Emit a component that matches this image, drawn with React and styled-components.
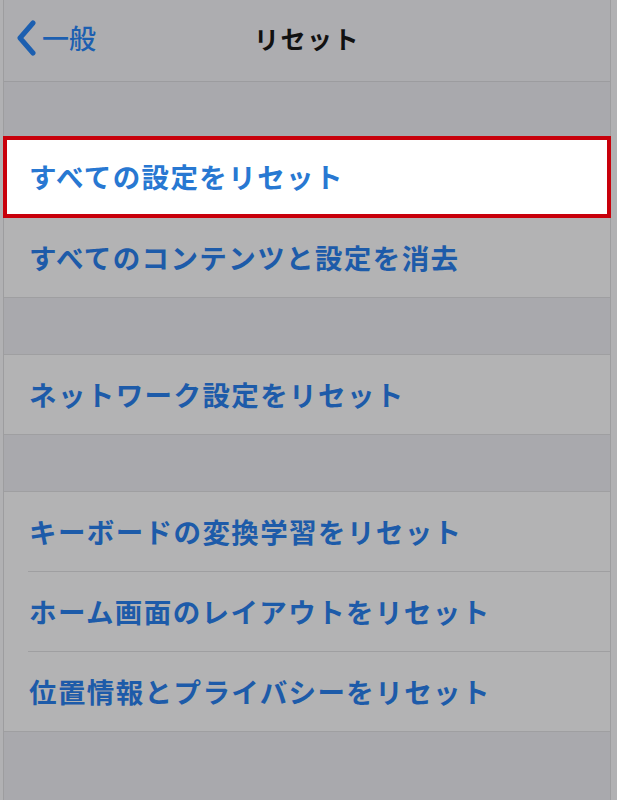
import React from 'react';
import styled, { createGlobalStyle } from 'styled-components';

const GlobalStyle = createGlobalStyle`
  html, body {
    margin: 0;
    padding: 0;
    background: #b1b1b3;
  }
  body {
    font-family: "Noto Sans CJK JP", "Noto Sans", sans-serif;
  }
`;

const Screen = styled.div`
  width: 617px;
  height: 800px;
  box-sizing: border-box;
  padding: 0 6px 0 3px;
  background: #b1b1b3;
  overflow: hidden;
`;

const Frame = styled.div`
  height: 100%;
  background: #a9a9ad;
  border-left: 1px solid #9d9d9f;
  border-right: 1px solid #9d9d9f;
  display: flex;
  flex-direction: column;
`;

const NavBar = styled.header`
  height: 82px;
  flex: none;
  display: grid;
  grid-template-columns: 1fr auto 1fr;
  align-items: center;
  background: #adadb0;
  border-bottom: 1px solid #9c9c9f;
  padding-bottom: 6px;
  box-sizing: border-box;
`;

const BackButton = styled.div`
  display: flex;
  align-items: center;
  gap: 3px;
  padding-left: 11px;
  color: #1c5fb0;
  font-size: 27px;
  font-weight: 500;
`;

const Title = styled.h1`
  margin: 0;
  font-size: 25px;
  font-weight: 700;
  color: #111;
  letter-spacing: 1.5px;
`;

const Gap = styled.div`
  height: ${p => p.h}px;
  flex: none;
`;

const Group = styled.section`
  background: #b3b3b4;
  border-top: ${p => (p.$flush ? 'none' : '1px solid #9f9fa1')};
  border-bottom: 1px solid #9f9fa1;
  display: flex;
  flex-direction: column;
`;

const Row = styled.div`
  height: ${p => (p.$active ? 82 : 79)}px;
  box-sizing: border-box;
  display: flex;
  align-items: center;
  padding-left: ${p => (p.$active ? 22 : 25)}px;
  padding-bottom: 2px;
  background: ${p => (p.$active ? '#ffffff' : 'transparent')};
  border: ${p => (p.$active ? '4px solid #c8000b' : 'none')};
  margin: ${p => (p.$active ? '0 -1px' : '0')};
`;

const Separator = styled.div`
  height: 1px;
  margin-left: ${p => p.inset}px;
  background: #9f9fa1;
`;

const Label = styled.span`
  font-size: 27.5px;
  font-weight: 700;
  letter-spacing: 1.4px;
  color: ${p => (p.$active ? '#2878d2' : '#1d5ba9')};
`;

const Chevron = () => (
  <svg width="24" height="36" viewBox="0 0 24 36">
    <path
      d="M18 3 L5 18 L18 33"
      fill="none"
      stroke="#1c5fb0"
      strokeWidth="5"
      strokeLinecap="round"
      strokeLinejoin="round"
    />
  </svg>
);

const groups = [
  ['すべての設定をリセット', 'すべてのコンテンツと設定を消去'],
  ['ネットワーク設定をリセット'],
  ['キーボードの変換学習をリセット', 'ホーム画面のレイアウトをリセット', '位置情報とプライバシーをリセット'],
];

export default function App() {
  return (
    <>
      <GlobalStyle />
      <Screen>
        <Frame>
          <NavBar>
            <BackButton>
              <Chevron />
              一般
            </BackButton>
            <Title>リセット</Title>
            <div />
          </NavBar>
          <Gap h={54} />
          {groups.map((items, gi) => (
            <React.Fragment key={gi}>
              {gi > 0 && <Gap h={56} />}
              <Group $flush={gi === 0}>
                {items.map((text, i) => {
                  const active = gi === 0 && i === 0;
                  return (
                    <React.Fragment key={text}>
                      {i > 0 && gi > 0 && <Separator inset={24} />}
                      <Row $active={active}>
                        <Label $active={active}>{text}</Label>
                      </Row>
                    </React.Fragment>
                  );
                })}
              </Group>
            </React.Fragment>
          ))}
        </Frame>
      </Screen>
    </>
  );
}
